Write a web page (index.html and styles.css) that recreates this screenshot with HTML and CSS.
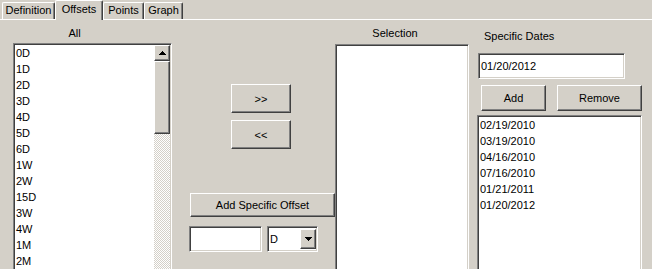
FILE: index.html
```html
<!DOCTYPE html>
<html lang="en">
  <head>
    <meta charset="UTF-8" />
    <title>Offsets</title>
    <link rel="stylesheet" href="styles.css">
  </head>
  <body>
    <div class="tabs">
      <div class="tab tab-def">Definition</div>
      <div class="tab tab-active">Offsets</div>
      <div class="tab tab-points">Points</div>
      <div class="tab tab-graph">Graph</div>
    </div>

    <div class="panel">
      <!-- All offsets -->
      <div class="col col-all">
        <div class="label label-all">All</div>
        <div class="field list list-all">
          <ul class="items">
            <li>0D</li>
            <li>1D</li>
            <li>2D</li>
            <li>3D</li>
            <li>4D</li>
            <li>5D</li>
            <li>6D</li>
            <li>1W</li>
            <li>2W</li>
            <li>15D</li>
            <li>3W</li>
            <li>4W</li>
            <li>1M</li>
            <li>2M</li>
          </ul>
          <div class="scrollbar">
            <div class="raised sb-btn">
              <svg width="7" height="4" viewBox="0 0 7 4" shape-rendering="crispEdges"><polygon points="3.5,0 7,4 0,4" fill="#000"/></svg>
            </div>
            <div class="raised sb-thumb"></div>
            <div class="sb-track"></div>
          </div>
        </div>
      </div>

      <!-- Move buttons -->
      <div class="col col-mid">
        <button class="raised btn btn-move">&gt;&gt;</button>
        <button class="raised btn btn-move btn-back">&lt;&lt;</button>
        <button class="raised btn btn-offset">Add Specific Offset</button>
        <div class="offset-row">
          <div class="field input-offset"></div>
          <div class="field combo">
            <span class="combo-value">D</span>
            <div class="raised combo-btn">
              <svg width="7" height="4" viewBox="0 0 7 4" shape-rendering="crispEdges"><polygon points="0,0 7,0 3.5,4" fill="#000"/></svg>
            </div>
          </div>
        </div>
      </div>

      <!-- Selection -->
      <div class="col col-sel">
        <div class="label label-sel">Selection</div>
        <div class="field list list-sel"></div>
      </div>

      <!-- Specific dates -->
      <div class="col col-dates">
        <div class="label label-dates">Specific Dates</div>
        <div class="field input-date">01/20/2012</div>
        <div class="date-buttons">
          <button class="raised btn btn-add">Add</button>
          <button class="raised btn btn-remove">Remove</button>
        </div>
        <div class="field list list-dates">
          <ul class="items">
            <li>02/19/2010</li>
            <li>03/19/2010</li>
            <li>04/16/2010</li>
            <li>07/16/2010</li>
            <li>01/21/2011</li>
            <li>01/20/2012</li>
          </ul>
        </div>
      </div>
    </div>
  </body>
</html>
```

FILE: styles.css
```css
/* Reset */
* {
  margin: 0;
  padding: 0;
  box-sizing: border-box;
}

body {
  font-family: "Liberation Sans", Arial, sans-serif;
  font-size: 11px;
  color: #000;
  background: #d4d0c8;
  height: 269px;
  overflow: hidden;
}

/* 3D borders, classic look */
.raised {
  background: #d4d0c8;
  border: 1px solid;
  border-color: #fff #404040 #404040 #fff;
  box-shadow: inset -1px -1px #808080;
}

.field {
  background: #fff;
  border: 1px solid;
  border-color: #808080 #fff #fff #808080;
  box-shadow: inset 1px 1px #404040, inset -1px -1px #d4d0c8;
  padding: 1px;
}

/* Tabs */
.tabs {
  display: flex;
  align-items: flex-end;
  height: 19px;
  padding-left: 2px;
}

.tab {
  height: 17px;
  border: 1px solid;
  border-bottom: none;
  border-color: #fff #404040 #fff #fff;
  border-radius: 2px 2px 0 0;
  box-shadow: inset -1px 0 #808080;
  line-height: 15px;
  text-align: center;
}

.tab-def {
  width: 53px;
}

.tab-active {
  position: relative;
  z-index: 1;
  width: 48px;
  height: 20px;
  margin-bottom: -1px;
  padding-top: 1px;
  background: #d4d0c8;
}

.tab-points {
  width: 41px;
}

.tab-graph {
  width: 39px;
}

/* Panel */
.panel {
  display: flex;
  height: 250px;
  border-top: 1px solid #fff;
  overflow: hidden;
}

.col {
  display: flex;
  flex-direction: column;
}

.label {
  line-height: 14px;
}

.list {
  flex-shrink: 0;
}

.items {
  list-style: none;
}

.items li {
  line-height: 16px;
  padding-left: 1px;
  white-space: nowrap;
}

/* All column */
.col-all {
  width: 159px;
  margin-left: 13px;
}

.label-all {
  margin-top: 6px;
  padding-right: 36px;
  text-align: center;
}

.list-all {
  display: flex;
  height: 240px;
  margin-top: 3px;
  overflow: hidden;
}

.list-all .items {
  flex: 1;
}

.scrollbar {
  display: flex;
  flex-direction: column;
  width: 16px;
}

.sb-btn {
  display: flex;
  align-items: center;
  justify-content: center;
  height: 16px;
  flex-shrink: 0;
}

.sb-thumb {
  height: 73px;
  flex-shrink: 0;
}

.sb-track {
  flex: 1;
  background: repeating-conic-gradient(#fff 0 25%, #d4d0c8 0 50%) 0 0 / 2px 2px;
}

/* Middle column */
.col-mid {
  width: 146px;
  margin-left: 17px;
  padding-top: 64px;
}

.btn {
  font: inherit;
  color: #000;
  text-align: center;
}

.btn-move {
  width: 60px;
  height: 29px;
  margin-left: 42px;
}

.btn-back {
  margin-top: 7px;
}

.btn-offset {
  width: 145px;
  height: 24px;
  margin-top: 44px;
  margin-left: 1px;
}

.offset-row {
  display: flex;
  gap: 5px;
  margin-top: 9px;
}

.input-offset {
  width: 73px;
  height: 26px;
}

.combo {
  display: flex;
  width: 51px;
  height: 26px;
}

.combo-value {
  flex: 1;
  line-height: 22px;
  padding-left: 1px;
}

.combo-btn {
  display: flex;
  align-items: center;
  justify-content: center;
  width: 16px;
  height: 20px;
  margin-top: 1px;
}

/* Selection column */
.col-sel {
  width: 134px;
}

.label-sel {
  margin-top: 6px;
  padding-right: 14px;
  text-align: center;
}

.list-sel {
  height: 240px;
  margin-top: 4px;
}

/* Specific dates column */
.col-dates {
  width: 165px;
  margin-left: 8px;
}

.label-dates {
  margin-top: 9px;
  padding-left: 7px;
}

.input-date {
  width: 147px;
  height: 26px;
  margin-top: 10px;
  margin-left: 1px;
  line-height: 22px;
  padding-left: 2px;
}

.date-buttons {
  display: flex;
  gap: 11px;
  margin-top: 6px;
  margin-left: 4px;
}

.btn-add {
  width: 65px;
  height: 26px;
}

.btn-remove {
  width: 85px;
  height: 26px;
}

.list-dates {
  height: 160px;
  margin-top: 4px;
}
```
